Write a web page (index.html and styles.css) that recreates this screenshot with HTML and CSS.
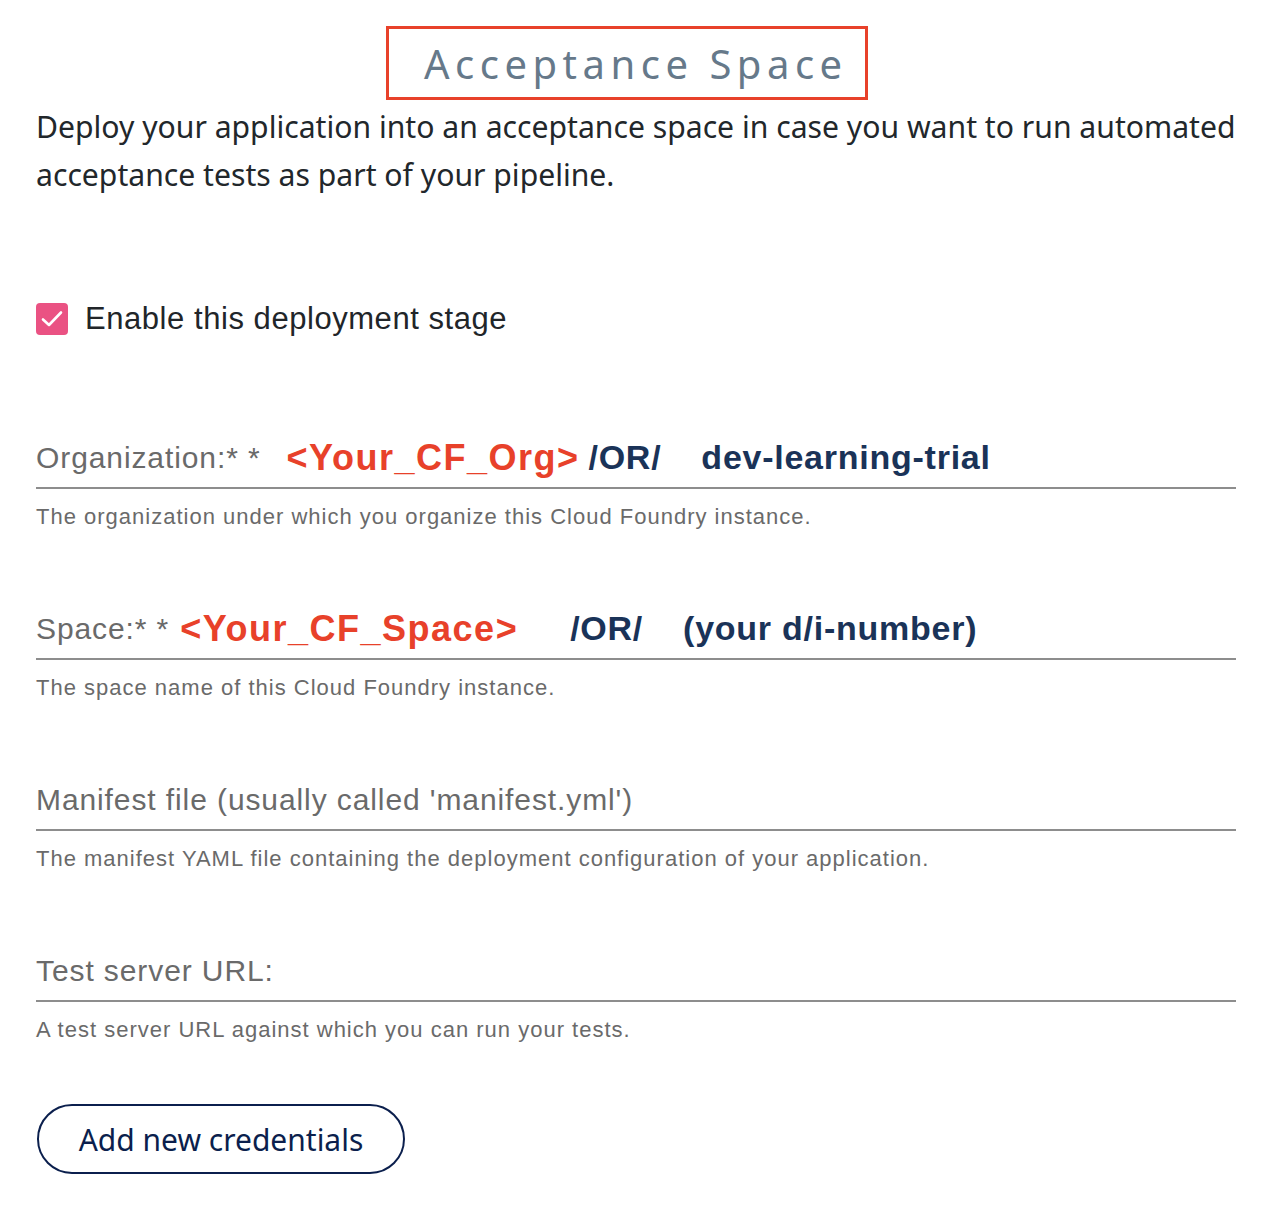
FILE: index.html
```html
<!DOCTYPE html>
<html>
<head>
<meta charset="utf-8">
<link rel="stylesheet" href="styles.css">
</head>
<body>
<div class="page">
  <div class="title-row">
    <h1 class="title">Acceptance Space</h1>
  </div>
  <p class="intro">Deploy your application into an acceptance space in case you want to run automated acceptance tests as part of your pipeline.</p>

  <label class="check">
    <span class="box">
      <svg width="22" height="18" viewBox="0 0 22 18"><path d="M2 9.5 L8 15 L20 2.5" fill="none" stroke="#fff" stroke-width="2.6" stroke-linecap="round" stroke-linejoin="round"/></svg>
    </span>
    <span class="check-text">Enable this deployment stage</span>
  </label>

  <div class="field field-first">
    <div class="input">
      <span class="label">Organization:* *</span>
      <span class="red org-red">&lt;Your_CF_Org&gt;</span>
      <span class="navy or1">/OR/</span>
      <span class="navy val1">dev-learning-trial</span>
    </div>
    <div class="help">The organization under which you organize this Cloud Foundry instance.</div>
  </div>

  <div class="field">
    <div class="input">
      <span class="label">Space:* *</span>
      <span class="red space-red">&lt;Your_CF_Space&gt;</span>
      <span class="navy or2">/OR/</span>
      <span class="navy val2">(your d/i-number)</span>
    </div>
    <div class="help">The space name of this Cloud Foundry instance.</div>
  </div>

  <div class="field">
    <div class="input">
      <span class="label">Manifest file (usually called 'manifest.yml')</span>
    </div>
    <div class="help">The manifest YAML file containing the deployment configuration of your application.</div>
  </div>

  <div class="field">
    <div class="input">
      <span class="label">Test server URL:</span>
    </div>
    <div class="help">A test server URL against which you can run your tests.</div>
  </div>

  <button class="btn">Add new credentials</button>
</div>
</body>
</html>
```

FILE: styles.css
```css
html, body {
  margin: 0;
  padding: 0;
  background: #ffffff;
}

.page {
  width: 1200px;
  padding: 26px 0 0 36px;
  display: flex;
  flex-direction: column;
  align-items: flex-start;
}

.title-row {
  margin-left: 350px;
}

.title {
  margin: 0;
  box-sizing: border-box;
  width: 482px;
  height: 74px;
  border: 3px solid #e8412a;
  display: flex;
  align-items: center;
  padding-left: 35px;
  font-family: "Noto Sans", sans-serif;
  font-weight: 400;
  font-size: 40px;
  letter-spacing: 5.5px;
  color: #66798a;
  white-space: nowrap;
}

.intro {
  margin: 3px 0 0 0;
  font-family: "Noto Sans", sans-serif;
  font-size: 30.15px;
  line-height: 48px;
  color: #22272b;
}

.check {
  margin-top: 104px;
  display: flex;
  align-items: center;
  height: 32px;
}

.box {
  width: 32px;
  height: 32px;
  border-radius: 4px;
  background: #ea5283;
  display: flex;
  align-items: center;
  justify-content: center;
}

.check-text {
  margin-left: 17px;
  font-family: "Liberation Sans", Arial, sans-serif;
  font-size: 31px;
  letter-spacing: 0.55px;
  color: #212529;
}

.field {
  width: 1200px;
  margin-top: 72px;
}

.field-first {
  margin-top: 97px;
}

.input {
  height: 51px;
  padding-bottom: 4px;
  border-bottom: 2px solid #8d8d8d;
  display: flex;
  align-items: center;
  white-space: nowrap;
}

.label {
  font-family: "Liberation Sans", Arial, sans-serif;
  font-size: 30px;
  letter-spacing: 0.9px;
  color: #6a6a6a;
}

.red, .navy {
  font-family: "Liberation Sans", Arial, sans-serif;
  font-weight: 700;
}

.red {
  font-size: 36px;
  letter-spacing: 1.5px;
  color: #e8412a;
}

.navy {
  font-size: 34px;
  letter-spacing: 0.75px;
  color: #1a3358;
}

.org-red { margin-left: 26px; }
.or1 { margin-left: 9px; }
.val1 { margin-left: 40px; }

.space-red { margin-left: 11px; }
.or2 { margin-left: 52px; }
.val2 { margin-left: 40px; }

.help {
  margin-top: 14px;
  font-family: "Liberation Sans", Arial, sans-serif;
  font-size: 22px;
  letter-spacing: 1px;
  line-height: 28px;
  color: #6a6a6a;
}

.btn {
  margin-top: 60px;
  margin-left: 1px;
  width: 368px;
  height: 70px;
  border: 2px solid #0b1f4d;
  border-radius: 35px;
  background: #ffffff;
  font-family: "Noto Sans", sans-serif;
  font-size: 30px;
  color: #0b1f4d;
  padding: 0;
}
```
